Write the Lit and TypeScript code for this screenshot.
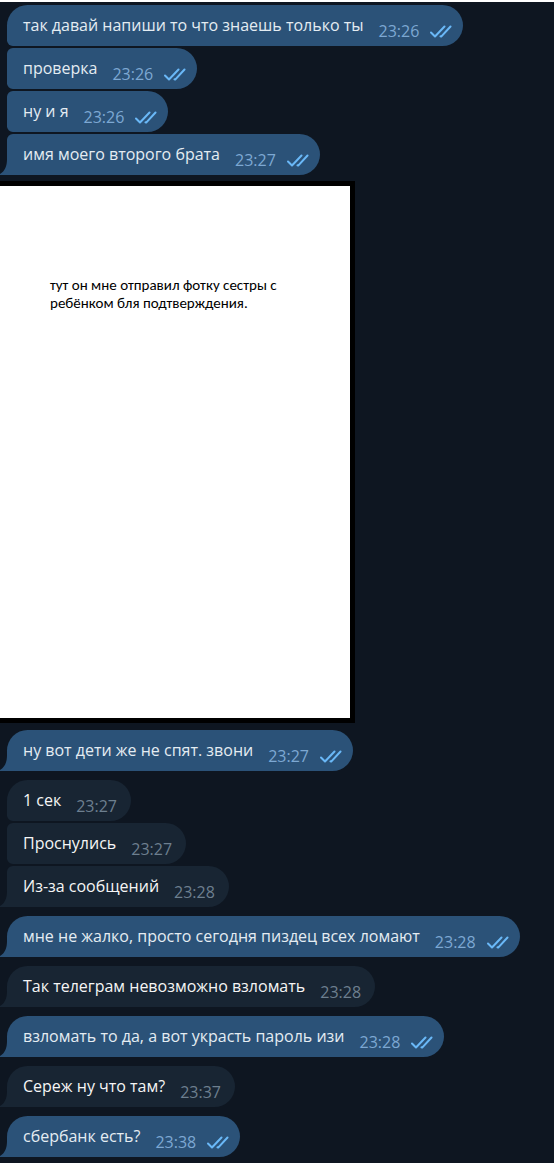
import { LitElement, html, css, nothing } from "lit";
import { customElement, property } from "lit/decorators.js";

interface Message {
  text: string;
  time: string;
  out?: boolean;
}

const before: Message[][] = [
  [
    { text: "так давай напиши то что знаешь только ты", time: "23:26", out: true },
    { text: "проверка", time: "23:26", out: true },
    { text: "ну и я", time: "23:26", out: true },
    { text: "имя моего второго брата", time: "23:27", out: true },
  ],
];

const after: Message[][] = [
  [{ text: "ну вот дети же не спят. звони", time: "23:27", out: true }],
  [
    { text: "1 сек", time: "23:27" },
    { text: "Проснулись", time: "23:27" },
    { text: "Из-за сообщений", time: "23:28" },
  ],
  [{ text: "мне не жалко, просто сегодня пиздец всех ломают", time: "23:28", out: true }],
  [{ text: "Так телеграм невозможно взломать", time: "23:28" }],
  [{ text: "взломать то да, а вот украсть пароль изи", time: "23:28", out: true }],
  [{ text: "Сереж ну что там?", time: "23:37" }],
  [{ text: "сбербанк есть?", time: "23:38", out: true }],
];

@customElement("chat-message")
export class ChatMessage extends LitElement {
  @property({ attribute: false }) message!: Message;
  @property({ type: Boolean }) first = false;
  @property({ type: Boolean }) last = false;

  static styles = css`
    :host {
      display: block;
    }
    .row {
      display: grid;
      grid-template-columns: 7px fit-content(100%);
      align-items: end;
      color: #182533;
    }
    .row.out {
      color: #2b5278;
    }
    .tail {
      display: block;
      width: 7px;
      height: 16px;
      fill: currentColor;
    }
    .bubble {
      grid-column: 2;
      display: flex;
      align-items: flex-end;
      box-sizing: border-box;
      min-height: 41px;
      padding: 0 14px 0 16px;
      border-radius: 6px 21px 21px 6px;
      background: currentColor;
    }
    .out .bubble {
      padding-right: 11px;
    }
    .bubble.first {
      border-top-left-radius: 21px;
    }
    .bubble.last {
      border-bottom-left-radius: 0;
    }
    .text {
      margin: 0;
      padding: 8px 0 9px;
      font-size: 16px;
      line-height: 24px;
      color: #f5f5f5;
    }
    .out .text {
      color: #e4ecf2;
    }
    time {
      margin-left: 15px;
      padding-bottom: 4px;
      font-size: 16px;
      line-height: 22px;
      color: #6d7f8f;
    }
    .out time {
      color: #7da8d3;
    }
    .checks {
      flex: none;
      width: 22px;
      height: 13px;
      margin: 0 0 8px 11px;
      fill: none;
      stroke: #6ab8f7;
      stroke-width: 2;
      stroke-linecap: round;
      stroke-linejoin: round;
    }
  `;

  render() {
    const { text, time, out } = this.message;
    return html`
      <div class="row ${out ? "out" : ""}">
        ${this.last
          ? html`<svg class="tail" viewBox="0 0 7 16" aria-hidden="true">
              <path d="M7 0C7 7 5 12 0 15V16H7Z" />
            </svg>`
          : nothing}
        <div class="bubble ${this.first ? "first" : ""} ${this.last ? "last" : ""}">
          <p class="text">${text}</p>
          <time>${time}</time>
          ${out
            ? html`<svg class="checks" viewBox="0 0 22 13" role="img" aria-label="Прочитано">
                <path d="M1 7.5L5 11.5L14.5 1.5M10.5 11.3L11.2 11.6L20.5 1.5" />
              </svg>`
            : nothing}
        </div>
      </div>
    `;
  }
}

@customElement("app-root")
export class AppRoot extends LitElement {
  static styles = css`
    :host {
      display: block;
      box-sizing: border-box;
      min-height: 100vh;
      border-top: 2px solid #ffffff;
      background: #0e1621;
      font-family: "Open Sans", "Noto Sans", sans-serif;
    }
    .chat {
      display: flex;
      flex-direction: column;
      padding: 3px 0 6px;
    }
    .group {
      display: flex;
      flex-direction: column;
      gap: 2px;
      margin-bottom: 9px;
    }
    .group:last-child {
      margin-bottom: 0;
    }
    .group.tight {
      margin-bottom: 6px;
    }
    .photo {
      box-sizing: border-box;
      width: 100%;
      max-width: 355px;
      aspect-ratio: 355 / 542;
      margin: 0 0 7px;
      padding: 90px 50px;
      border: 5px solid #000000;
      border-left: 0;
      background: #ffffff;
    }
    figcaption {
      font-family: Carlito, Lato, sans-serif;
      font-size: 15px;
      line-height: 18px;
      color: #000000;
    }
  `;

  private group(items: Message[], tight = false) {
    return html`<section class="group ${tight ? "tight" : ""}">
      ${items.map(
        (m, i) => html`<chat-message
          .message=${m}
          ?first=${i === 0}
          ?last=${i === items.length - 1}
        ></chat-message>`,
      )}
    </section>`;
  }

  render() {
    return html`
      <main class="chat">
        ${before.map((g) => this.group(g, true))}
        <figure class="photo">
          <figcaption>тут он мне отправил фотку сестры с ребёнком бля подтверждения.</figcaption>
        </figure>
        ${after.map((g) => this.group(g))}
      </main>
    `;
  }
}
